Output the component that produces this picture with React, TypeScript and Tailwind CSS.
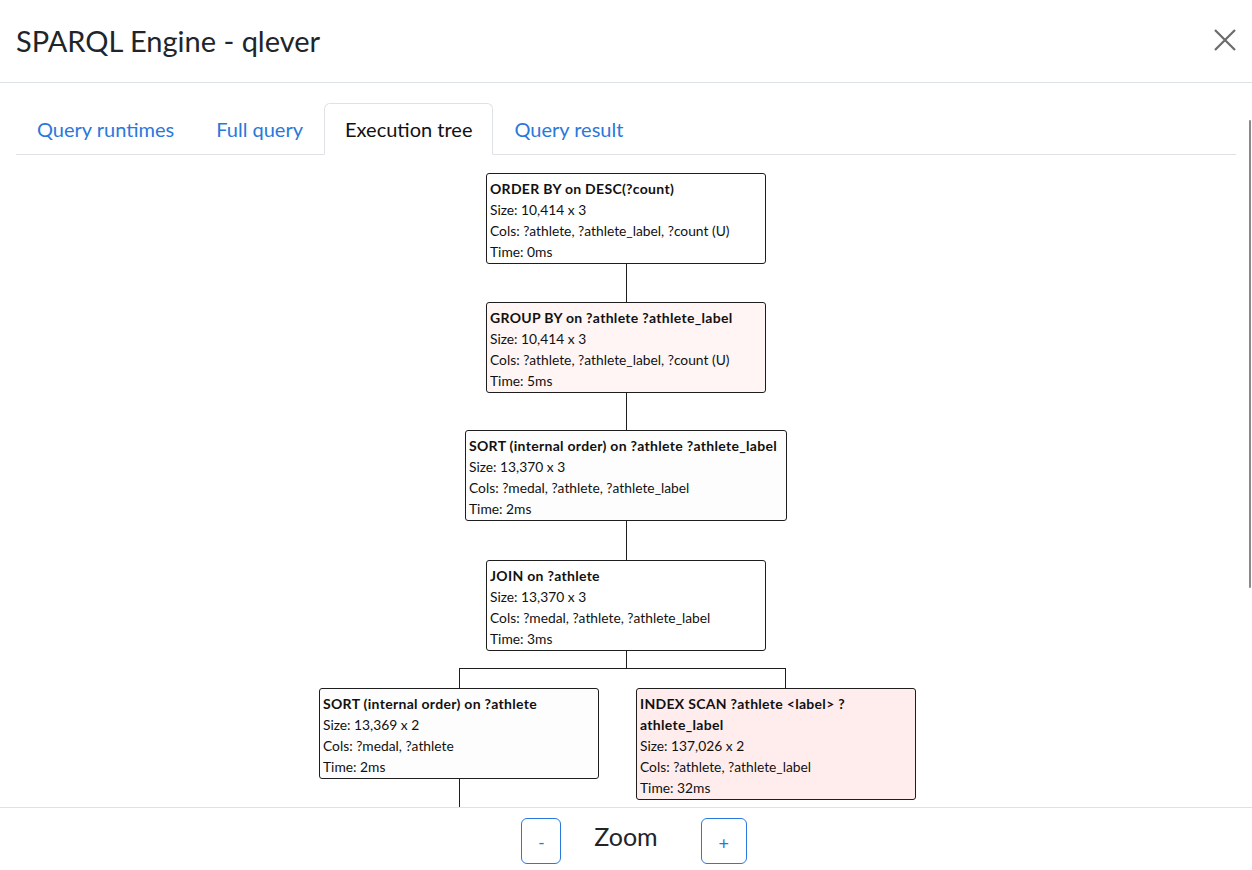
import React from 'react';

type TreeNodeProps = {
  title: React.ReactNode;
  size: string;
  cols: string;
  time: string;
  className?: string;
};

function TreeNode({ title, size, cols, time, className = '' }: TreeNodeProps) {
  return (
    <div
      className={`border border-[#1e1e1e] rounded-[3px] pl-[3px] pr-[3px] pt-[4px] pb-[1px] text-[13.8px] leading-[21px] text-[#111] ${className}`}
    >
      <div className="font-bold text-[14px] tracking-[0.3px]">{title}</div>
      <div>Size: {size}</div>
      <div>Cols: {cols}</div>
      <div>Time: {time}</div>
    </div>
  );
}

function VLine({ h }: { h: string }) {
  return <div className={`w-px bg-[#1e1e1e] ${h}`} />;
}

export default function App() {
  const tabs = ['Query runtimes', 'Full query', 'Execution tree', 'Query result'];
  const active = 'Execution tree';

  return (
    <div className="relative h-[870px] w-[1252px] overflow-hidden bg-white flex flex-col font-[Lato,'Open_Sans',sans-serif] text-[#212529]">
      {/* Header */}
      <div className="h-[83px] shrink-0 border-b border-[#dee2e6] flex items-center justify-between pl-4 pr-4">
        <h1 className="text-[29px] leading-none pb-[2px]">SPARQL Engine - qlever</h1>
        <button className="w-[22px] h-[22px] flex items-center justify-center text-[#6b6b6b] mb-[2px]">
          <svg width="22" height="22" viewBox="0 0 22 22" fill="none" stroke="currentColor" strokeWidth="2.2">
            <path d="M1 1 L21 21 M21 1 L1 21" />
          </svg>
        </button>
      </div>

      {/* Body */}
      <div className="flex-1 overflow-hidden pt-[20px] px-4">
        <div className="flex border-b border-[#dee2e6]">
          {tabs.map((t) => (
            <div
              key={t}
              className={
                t === active
                  ? 'px-[20px] h-[52px] -mb-px flex items-center text-[20px] text-[#111] bg-white border border-[#dee2e6] border-b-white rounded-t-[6px]'
                  : 'px-[20px] h-[52px] -mb-px flex items-center text-[20px] text-[#2a78dc] border border-transparent'
              }
            >
              {t}
            </div>
          ))}
        </div>

        {/* Execution tree */}
        <div className="flex flex-col items-center pt-[18px]">
          <TreeNode
            className="w-[280px] bg-white"
            title="ORDER BY on DESC(?count)"
            size="10,414 x 3"
            cols="?athlete, ?athlete_label, ?count (U)"
            time="0ms"
          />
          <VLine h="h-[38px]" />
          <TreeNode
            className="w-[280px] bg-[#fff5f5]"
            title="GROUP BY on ?athlete ?athlete_label"
            size="10,414 x 3"
            cols="?athlete, ?athlete_label, ?count (U)"
            time="5ms"
          />
          <VLine h="h-[37px]" />
          <TreeNode
            className="w-[322px] bg-[#fdfdfd]"
            title="SORT (internal order) on ?athlete ?athlete_label"
            size="13,370 x 3"
            cols="?medal, ?athlete, ?athlete_label"
            time="2ms"
          />
          <VLine h="h-[39px]" />
          <TreeNode
            className="w-[280px] bg-white"
            title="JOIN on ?athlete"
            size="13,370 x 3"
            cols="?medal, ?athlete, ?athlete_label"
            time="3ms"
          />
          <VLine h="h-[17px]" />

          {/* Branch */}
          <div className="w-[597px] mr-[17px] flex flex-col">
            <div className="ml-[140px] w-[327px] h-[20px] border-t border-x border-[#1e1e1e]" />
            <div className="flex items-start">
              <div className="flex flex-col items-center">
                <TreeNode
                  className="w-[280px] bg-[#fdfdfd]"
                  title="SORT (internal order) on ?athlete"
                  size="13,369 x 2"
                  cols="?medal, ?athlete"
                  time="2ms"
                />
                <VLine h="h-[40px]" />
              </div>
              <TreeNode
                className="w-[280px] ml-[37px] bg-[#ffeded]"
                title={
                  <>
                    INDEX SCAN ?athlete &lt;label&gt; ?
                    <br />
                    athlete_label
                  </>
                }
                size="137,026 x 2"
                cols="?athlete, ?athlete_label"
                time="32ms"
              />
            </div>
          </div>
        </div>
      </div>

      {/* Footer */}
      <div className="h-[63px] shrink-0 border-t border-[#dee2e6] bg-white flex items-start justify-center pt-[10px] pl-[16px]">
        <button className="w-[40px] h-[46px] border border-[#2a78dc] rounded-[6px] text-[#2a78dc] text-[17px] flex items-center justify-center pt-[4px]">
          -
        </button>
        <div className="ml-[33px] mr-[43px] text-[25px] leading-none pt-[6px]">Zoom</div>
        <button className="w-[46px] h-[46px] border border-[#2a78dc] rounded-[6px] text-[#2a78dc] text-[18px] flex items-center justify-center pt-[4px]">
          +
        </button>
      </div>

      {/* overlay scrollbar */}
      <div className="absolute left-[1249px] top-[120px] w-[2px] h-[468px] bg-[#8a8a8a] rounded-full" />
    </div>
  );
}
